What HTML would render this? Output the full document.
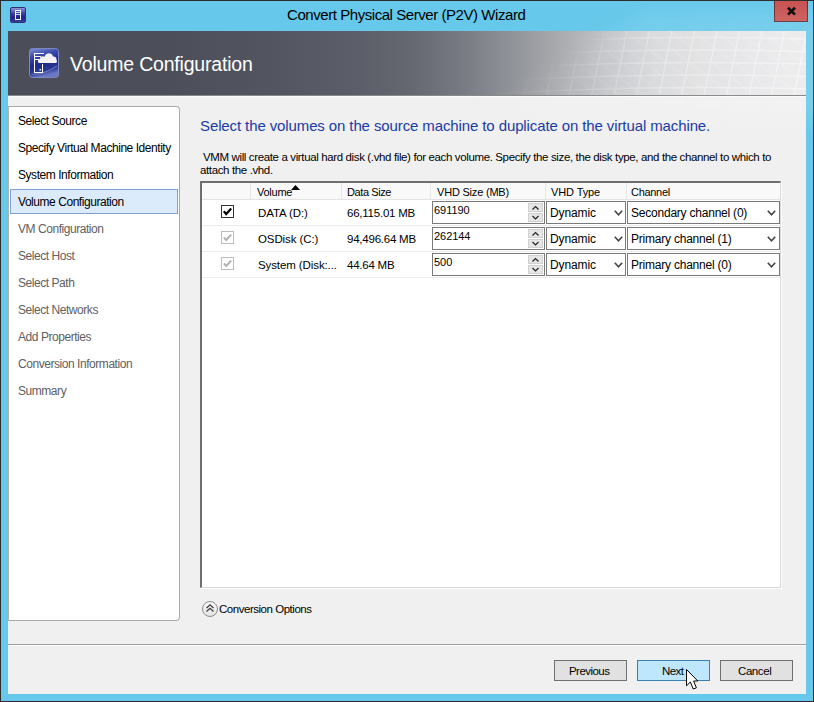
<!DOCTYPE html>
<html><head><meta charset="utf-8">
<style>
*{box-sizing:border-box;margin:0;padding:0}
html,body{width:814px;height:702px;overflow:hidden;background:#2b2b2b}
body{position:relative;font-family:"Liberation Sans",sans-serif;color:#000}
.a{position:absolute}
.t{position:absolute;white-space:pre;line-height:16px}
svg.a{overflow:visible}
</style></head><body>
<div class="a" style="left:0px;top:0px;width:814px;height:702px;background:#2b2b2b"></div>
<div class="a" style="left:1px;top:1px;width:812px;height:700px;background:#66c8ea"></div>
<div class="a" style="left:10px;top:7px;width:16px;height:16px;background:linear-gradient(#8f96d6,#3a3f9a 40%,#1e2383 70%,#3c42a0);border:1px solid #2d3175;border-radius:2px"></div>
<div class="a" style="left:15px;top:10px;width:6px;height:10px;border:1px solid #f4f4ff"></div>
<div class="a" style="left:16px;top:12px;width:4px;height:1px;background:#c9ceff"></div>
<div class="a" style="left:16px;top:14px;width:4px;height:1px;background:#c9ceff"></div>
<div class="t" style="left:287px;top:7px;font-size:15px;letter-spacing:-0.44px;color:#000">Convert Physical Server (P2V) Wizard</div>
<div class="a" style="left:774px;top:1px;width:34px;height:21px;background:#c75050;border:1px solid #5e2a2a;border-top:none"></div>
<svg class="a" style="left:786px;top:6px" width="11" height="10" viewBox="0 0 11 10"><path d="M2 1.8 L9 8.6 M9 1.8 L2 8.6" stroke="#000" stroke-width="2.7"/></svg>
<div class="a" style="left:8px;top:31px;width:798px;height:663px;background:#f0f0f0"></div>
<svg class="a" style="left:8px;top:31px" width="798" height="65" viewBox="0 0 798 65">
<defs>
<linearGradient id="hg" x1="0" y1="0" x2="798" y2="0" gradientUnits="userSpaceOnUse">
<stop offset="0" stop-color="#4b4e58"/><stop offset="0.2" stop-color="#4c4f59"/><stop offset="0.34" stop-color="#535661"/><stop offset="0.44" stop-color="#5c5f69"/><stop offset="0.5" stop-color="#64676f"/><stop offset="0.56" stop-color="#74777f"/><stop offset="0.625" stop-color="#8d9096"/><stop offset="0.69" stop-color="#a8aaae"/><stop offset="0.75" stop-color="#c2c3c7"/><stop offset="0.81" stop-color="#d6d7d9"/><stop offset="0.875" stop-color="#e0e0e2"/><stop offset="0.94" stop-color="#e6e6e8"/><stop offset="1" stop-color="#eaeaec"/>
</linearGradient>
<linearGradient id="sg" x1="460" y1="0" x2="798" y2="0" gradientUnits="userSpaceOnUse">
<stop offset="0" stop-color="#fff" stop-opacity="0"/><stop offset="0.3" stop-color="#fff" stop-opacity="0.12"/><stop offset="0.6" stop-color="#fff" stop-opacity="0.3"/><stop offset="1" stop-color="#fff" stop-opacity="0.42"/>
</linearGradient>
<linearGradient id="sf" x1="460" y1="0" x2="798" y2="0" gradientUnits="userSpaceOnUse">
<stop offset="0" stop-color="#fff" stop-opacity="0"/><stop offset="0.4" stop-color="#fff" stop-opacity="0.1"/><stop offset="1" stop-color="#fff" stop-opacity="0.12"/>
</linearGradient>
<filter id="mb" x="-20%" y="-100%" width="140%" height="300%"><feGaussianBlur stdDeviation="10"/></filter><mask id="mm" maskUnits="userSpaceOnUse" x="0" y="0" width="798" height="65"><path d="M440 90 C520 60 570 25 640 -20 L850 -20 L850 90 Z" fill="url(#sg)" filter="url(#mb)"/></mask>
<filter id="bl"><feGaussianBlur stdDeviation="0.6"/></filter>
</defs>
<rect width="798" height="65" fill="url(#hg)"/>
<path d="M440 90 C520 60 570 25 640 -20 L850 -20 L850 90 Z" fill="url(#sf)" filter="url(#mb)"/>
<g stroke="#ffffff" stroke-width="1.5" fill="none" mask="url(#mm)" filter="url(#bl)"><path d="M380.0 70 L395.0 -5"/><path stroke-opacity="0.45" d="M340.0 -5 L440.0 70"/><path d="M402.5 70 L417.5 -5"/><path stroke-opacity="0.45" d="M362.5 -5 L462.5 70"/><path d="M425.0 70 L440.0 -5"/><path stroke-opacity="0.45" d="M385.0 -5 L485.0 70"/><path d="M447.5 70 L462.5 -5"/><path stroke-opacity="0.45" d="M407.5 -5 L507.5 70"/><path d="M470.0 70 L485.0 -5"/><path stroke-opacity="0.45" d="M430.0 -5 L530.0 70"/><path d="M492.5 70 L507.5 -5"/><path stroke-opacity="0.45" d="M452.5 -5 L552.5 70"/><path d="M515.0 70 L530.0 -5"/><path stroke-opacity="0.45" d="M475.0 -5 L575.0 70"/><path d="M537.5 70 L552.5 -5"/><path stroke-opacity="0.45" d="M497.5 -5 L597.5 70"/><path d="M560.0 70 L575.0 -5"/><path stroke-opacity="0.45" d="M520.0 -5 L620.0 70"/><path d="M582.5 70 L597.5 -5"/><path stroke-opacity="0.45" d="M542.5 -5 L642.5 70"/><path d="M605.0 70 L620.0 -5"/><path stroke-opacity="0.45" d="M565.0 -5 L665.0 70"/><path d="M627.5 70 L642.5 -5"/><path stroke-opacity="0.45" d="M587.5 -5 L687.5 70"/><path d="M650.0 70 L665.0 -5"/><path stroke-opacity="0.45" d="M610.0 -5 L710.0 70"/><path d="M672.5 70 L687.5 -5"/><path stroke-opacity="0.45" d="M632.5 -5 L732.5 70"/><path d="M695.0 70 L710.0 -5"/><path stroke-opacity="0.45" d="M655.0 -5 L755.0 70"/><path d="M717.5 70 L732.5 -5"/><path stroke-opacity="0.45" d="M677.5 -5 L777.5 70"/><path d="M740.0 70 L755.0 -5"/><path stroke-opacity="0.45" d="M700.0 -5 L800.0 70"/><path d="M762.5 70 L777.5 -5"/><path stroke-opacity="0.45" d="M722.5 -5 L822.5 70"/><path d="M785.0 70 L800.0 -5"/><path stroke-opacity="0.45" d="M745.0 -5 L845.0 70"/><path d="M807.5 70 L822.5 -5"/><path stroke-opacity="0.45" d="M767.5 -5 L867.5 70"/><path d="M830.0 70 L845.0 -5"/><path stroke-opacity="0.45" d="M790.0 -5 L890.0 70"/><path d="M852.5 70 L867.5 -5"/><path stroke-opacity="0.45" d="M812.5 -5 L912.5 70"/><path d="M875.0 70 L890.0 -5"/><path stroke-opacity="0.45" d="M835.0 -5 L935.0 70"/><path d="M897.5 70 L912.5 -5"/><path stroke-opacity="0.45" d="M857.5 -5 L957.5 70"/><path d="M920.0 70 L935.0 -5"/><path stroke-opacity="0.45" d="M880.0 -5 L980.0 70"/><path d="M942.5 70 L957.5 -5"/><path stroke-opacity="0.45" d="M902.5 -5 L1002.5 70"/><path d="M965.0 70 L980.0 -5"/><path stroke-opacity="0.45" d="M925.0 -5 L1025.0 70"/><path d="M987.5 70 L1002.5 -5"/><path stroke-opacity="0.45" d="M947.5 -5 L1047.5 70"/><path d="M1010.0 70 L1025.0 -5"/><path stroke-opacity="0.45" d="M970.0 -5 L1070.0 70"/><path d="M1032.5 70 L1047.5 -5"/><path stroke-opacity="0.45" d="M992.5 -5 L1092.5 70"/><path d="M380 -5.0 Q600 -23.0 800 -17.0"/><path d="M380 7.5 Q600 -10.5 800 -4.5"/><path d="M380 20.0 Q600 2.0 800 8.0"/><path d="M380 32.5 Q600 14.5 800 20.5"/><path d="M380 45.0 Q600 27.0 800 33.0"/><path d="M380 57.5 Q600 39.5 800 45.5"/><path d="M380 70.0 Q600 52.0 800 58.0"/><path d="M380 82.5 Q600 64.5 800 70.5"/><path d="M380 95.0 Q600 77.0 800 83.0"/><path d="M380 107.5 Q600 89.5 800 95.5"/><path d="M380 120.0 Q600 102.0 800 108.0"/></g>
</svg>
<div class="a" style="left:8px;top:95px;width:798px;height:1px;background:#8a8a8a"></div>
<div class="a" style="left:8px;top:96px;width:798px;height:1px;background:#fbfbfb"></div>
<svg class="a" style="left:29px;top:48px" width="30" height="30" viewBox="0 0 30 30">
<defs><linearGradient id="ig" x1="0" y1="0" x2="0.25" y2="1"><stop offset="0" stop-color="#8894d6"/><stop offset="0.3" stop-color="#3a4aaa"/><stop offset="0.6" stop-color="#1d2a8c"/><stop offset="0.85" stop-color="#2b3994"/><stop offset="1" stop-color="#6b77c0"/></linearGradient></defs>
<rect x="0.5" y="0.5" width="29" height="29" rx="3" fill="url(#ig)" stroke="#7d88c4"/>
<path d="M2 26 Q15 27 28 18" stroke="#9aa6e0" stroke-opacity="0.5" stroke-width="1.2" fill="none"/>
<path d="M5.5 5 V25 M5 5.5 H15 M5 8.5 H12 M5 11.5 H10 M13.5 16 V25 M5 24.5 H14" stroke="#fff" stroke-width="1" fill="none"/>
<rect x="10.5" y="21" width="1.5" height="1.5" fill="#fff"/>
<path d="M10.5 15 C8.3 15 8.3 11 11 11 C11 8.5 13.5 7.5 15.5 8.8 C16.5 4.5 23 4 24 8.5 C26 8 28 10 27.5 12 C28.5 13 28 15 26.5 15 Z" fill="#f3f3f7"/>
</svg>
<div class="t" style="left:70px;top:56px;font-size:19.5px;letter-spacing:-0.19px;color:#fff">Volume Configuration</div>
<div class="a" style="left:8px;top:106px;width:172px;height:515px;background:#fff;border:1px solid #a9a9a9;border-left-color:#b4b4b4;border-radius:0 4px 4px 0"></div>
<div class="a" style="left:10px;top:189px;width:168px;height:25px;background:#dcebfc;border:1px solid #7da2ce"></div>
<div class="t" style="left:18px;top:113px;font-size:12px;letter-spacing:-0.45px;color:#000">Select Source</div>
<div class="t" style="left:18px;top:140px;font-size:12px;letter-spacing:-0.45px;color:#000">Specify Virtual Machine Identity</div>
<div class="t" style="left:18px;top:167px;font-size:12px;letter-spacing:-0.45px;color:#000">System Information</div>
<div class="t" style="left:18px;top:194px;font-size:12px;letter-spacing:-0.45px;color:#000">Volume Configuration</div>
<div class="t" style="left:18px;top:221px;font-size:12px;letter-spacing:-0.45px;color:#606060">VM Configuration</div>
<div class="t" style="left:18px;top:248px;font-size:12px;letter-spacing:-0.45px;color:#606060">Select Host</div>
<div class="t" style="left:18px;top:275px;font-size:12px;letter-spacing:-0.45px;color:#606060">Select Path</div>
<div class="t" style="left:18px;top:302px;font-size:12px;letter-spacing:-0.45px;color:#606060">Select Networks</div>
<div class="t" style="left:18px;top:329px;font-size:12px;letter-spacing:-0.45px;color:#606060">Add Properties</div>
<div class="t" style="left:18px;top:356px;font-size:12px;letter-spacing:-0.45px;color:#606060">Conversion Information</div>
<div class="t" style="left:18px;top:383px;font-size:12px;letter-spacing:-0.45px;color:#606060">Summary</div>
<div class="t" style="left:200px;top:118px;font-size:15px;letter-spacing:-0.11px;color:#1b3ba4">Select the volumes on the source machine to duplicate on the virtual machine.</div>
<div class="t" style="left:203px;top:149px;font-size:11.5px;letter-spacing:-0.37px">VMM will create a virtual hard disk (.vhd file) for each volume. Specify the size, the disk type, and the channel to which to</div>
<div class="t" style="left:200px;top:162px;font-size:11.5px;letter-spacing:-0.37px">attach the .vhd.</div>
<div class="a" style="left:200px;top:181px;width:581px;height:407px;background:#fff;border-left:2px solid #6e6e6e;border-top:2px solid #6e6e6e;border-right:1px solid #d8d8d8;border-bottom:1px solid #d8d8d8"></div>
<div class="a" style="left:781px;top:181px;width:1px;height:408px;background:#fdfdfd"></div>
<div class="a" style="left:200px;top:588px;width:582px;height:1px;background:#fdfdfd"></div>
<div class="a" style="left:202px;top:183px;width:578px;height:16px;background:#f9f9f9"></div>
<div class="a" style="left:202px;top:199px;width:578px;height:1px;background:#e3e3e3"></div>
<div class="a" style="left:250px;top:183px;width:1px;height:16px;background:#e6e6e6"></div>
<div class="a" style="left:341px;top:183px;width:1px;height:16px;background:#e6e6e6"></div>
<div class="a" style="left:430px;top:183px;width:1px;height:16px;background:#e6e6e6"></div>
<div class="a" style="left:545px;top:183px;width:1px;height:16px;background:#e6e6e6"></div>
<div class="a" style="left:626px;top:183px;width:1px;height:16px;background:#e6e6e6"></div>
<div class="t" style="left:257px;top:184px;font-size:11px;letter-spacing:-0.25px">Volume</div>
<svg class="a" style="left:291px;top:185px" width="9" height="5"><path d="M0 5 L4.5 0 L9 5Z" fill="#000"/></svg>
<div class="t" style="left:347px;top:184px;font-size:11px;letter-spacing:-0.4px">Data Size</div>
<div class="t" style="left:437px;top:184px;font-size:11px;letter-spacing:-0.2px">VHD Size (MB)</div>
<div class="t" style="left:551px;top:184px;font-size:11px;letter-spacing:-0.1px">VHD Type</div>
<div class="t" style="left:631px;top:184px;font-size:11px;letter-spacing:-0.3px">Channel</div>
<div class="a" style="left:202px;top:225px;width:578px;height:1px;background:#ececec"></div>
<div class="a" style="left:202px;top:251px;width:578px;height:1px;background:#ececec"></div>
<div class="a" style="left:202px;top:277px;width:578px;height:1px;background:#ececec"></div>
<div class="a" style="left:221px;top:205px;width:13px;height:13px;background:#fff;border:1px solid #333"></div>
<svg class="a" style="left:221px;top:205px" width="13" height="13"><path d="M2.8 6.3 L5.2 9 L10.2 3.6" stroke="#000" stroke-width="2.2" fill="none"/></svg>
<div class="t" style="left:258px;top:205px;font-size:11.5px;letter-spacing:-0.1px">DATA (D:)</div>
<div class="t" style="left:347px;top:205px;font-size:11.5px;letter-spacing:-0.23px">66,115.01 MB</div>
<div class="a" style="left:432px;top:201px;width:113px;height:23px;background:#fff;border:1px solid #7a7a7a"></div>
<div class="t" style="left:434px;top:202px;font-size:11px;letter-spacing:-0.05px">691190</div>
<div class="a" style="left:528px;top:203px;width:15px;height:9px;background:#e6e6e6;border:1px solid #d0d0d0"></div>
<div class="a" style="left:528px;top:213px;width:15px;height:9px;background:#e6e6e6;border:1px solid #d0d0d0"></div>
<svg class="a" style="left:528px;top:203px" width="15" height="19"><path d="M4.5 6.5 L7.5 3.5 L10.5 6.5 M4.5 13 L7.5 16 L10.5 13" stroke="#222" stroke-width="1.2" fill="none"/></svg>
<div class="a" style="left:546px;top:201px;width:80px;height:23px;background:#fff;border:1px solid #7a7a7a"></div>
<div class="t" style="left:550px;top:205px;font-size:12px;letter-spacing:-0.1px">Dynamic</div>
<svg class="a" style="left:614px;top:210px" width="9" height="6"><path d="M0.8 0.8 L4.5 4.8 L8.2 0.8" stroke="#444" stroke-width="1.6" fill="none"/></svg>
<div class="a" style="left:627px;top:201px;width:153px;height:23px;background:#fff;border:1px solid #7a7a7a"></div>
<div class="t" style="left:631px;top:205px;font-size:12px;letter-spacing:-0.22px">Secondary channel (0)</div>
<svg class="a" style="left:767px;top:210px" width="9" height="6"><path d="M0.8 0.8 L4.5 4.8 L8.2 0.8" stroke="#444" stroke-width="1.6" fill="none"/></svg>
<div class="a" style="left:221px;top:231px;width:13px;height:13px;background:#fff;border:1px solid #bcbcbc"></div>
<svg class="a" style="left:221px;top:231px" width="13" height="13"><path d="M2.8 6.3 L5.2 9 L10.2 3.6" stroke="#b0b0b0" stroke-width="1.9" fill="none"/></svg>
<div class="t" style="left:258px;top:231px;font-size:11.5px;letter-spacing:-0.1px">OSDisk (C:)</div>
<div class="t" style="left:347px;top:231px;font-size:11.5px;letter-spacing:-0.23px">94,496.64 MB</div>
<div class="a" style="left:432px;top:227px;width:113px;height:23px;background:#fff;border:1px solid #7a7a7a"></div>
<div class="t" style="left:434px;top:228px;font-size:11px;letter-spacing:-0.05px">262144</div>
<div class="a" style="left:528px;top:229px;width:15px;height:9px;background:#e6e6e6;border:1px solid #d0d0d0"></div>
<div class="a" style="left:528px;top:239px;width:15px;height:9px;background:#e6e6e6;border:1px solid #d0d0d0"></div>
<svg class="a" style="left:528px;top:229px" width="15" height="19"><path d="M4.5 6.5 L7.5 3.5 L10.5 6.5 M4.5 13 L7.5 16 L10.5 13" stroke="#222" stroke-width="1.2" fill="none"/></svg>
<div class="a" style="left:546px;top:227px;width:80px;height:23px;background:#fff;border:1px solid #7a7a7a"></div>
<div class="t" style="left:550px;top:231px;font-size:12px;letter-spacing:-0.1px">Dynamic</div>
<svg class="a" style="left:614px;top:236px" width="9" height="6"><path d="M0.8 0.8 L4.5 4.8 L8.2 0.8" stroke="#444" stroke-width="1.6" fill="none"/></svg>
<div class="a" style="left:627px;top:227px;width:153px;height:23px;background:#fff;border:1px solid #7a7a7a"></div>
<div class="t" style="left:631px;top:231px;font-size:12px;letter-spacing:-0.22px">Primary channel (1)</div>
<svg class="a" style="left:767px;top:236px" width="9" height="6"><path d="M0.8 0.8 L4.5 4.8 L8.2 0.8" stroke="#444" stroke-width="1.6" fill="none"/></svg>
<div class="a" style="left:221px;top:257px;width:13px;height:13px;background:#fff;border:1px solid #bcbcbc"></div>
<svg class="a" style="left:221px;top:257px" width="13" height="13"><path d="M2.8 6.3 L5.2 9 L10.2 3.6" stroke="#b0b0b0" stroke-width="1.9" fill="none"/></svg>
<div class="t" style="left:258px;top:257px;font-size:11.5px;letter-spacing:-0.1px">System (Disk:...</div>
<div class="t" style="left:347px;top:257px;font-size:11.5px;letter-spacing:-0.23px">44.64 MB</div>
<div class="a" style="left:432px;top:253px;width:113px;height:23px;background:#fff;border:1px solid #7a7a7a"></div>
<div class="t" style="left:434px;top:254px;font-size:11px;letter-spacing:-0.05px">500</div>
<div class="a" style="left:528px;top:255px;width:15px;height:9px;background:#e6e6e6;border:1px solid #d0d0d0"></div>
<div class="a" style="left:528px;top:265px;width:15px;height:9px;background:#e6e6e6;border:1px solid #d0d0d0"></div>
<svg class="a" style="left:528px;top:255px" width="15" height="19"><path d="M4.5 6.5 L7.5 3.5 L10.5 6.5 M4.5 13 L7.5 16 L10.5 13" stroke="#222" stroke-width="1.2" fill="none"/></svg>
<div class="a" style="left:546px;top:253px;width:80px;height:23px;background:#fff;border:1px solid #7a7a7a"></div>
<div class="t" style="left:550px;top:257px;font-size:12px;letter-spacing:-0.1px">Dynamic</div>
<svg class="a" style="left:614px;top:262px" width="9" height="6"><path d="M0.8 0.8 L4.5 4.8 L8.2 0.8" stroke="#444" stroke-width="1.6" fill="none"/></svg>
<div class="a" style="left:627px;top:253px;width:153px;height:23px;background:#fff;border:1px solid #7a7a7a"></div>
<div class="t" style="left:631px;top:257px;font-size:12px;letter-spacing:-0.22px">Primary channel (0)</div>
<svg class="a" style="left:767px;top:262px" width="9" height="6"><path d="M0.8 0.8 L4.5 4.8 L8.2 0.8" stroke="#444" stroke-width="1.6" fill="none"/></svg>
<div class="a" style="left:202px;top:601px;width:16px;height:16px;background:linear-gradient(#f8f8f8,#e4e4e4);border:1px solid #8c8c8c;border-radius:50%"></div>
<svg class="a" style="left:205px;top:603px" width="10" height="10"><path d="M1.5 5 L5 1.8 L8.5 5 M1.5 8.5 L5 5.3 L8.5 8.5" stroke="#3a3a3a" stroke-width="1.2" fill="none"/></svg>
<div class="t" style="left:219px;top:601px;font-size:11.5px;letter-spacing:-0.47px">Conversion Options</div>
<div class="a" style="left:8px;top:644px;width:798px;height:1px;background:#a0a0a0"></div>
<div class="a" style="left:8px;top:645px;width:798px;height:1px;background:#fcfcfc"></div>
<div class="a" style="left:554px;top:660px;width:73px;height:21px;background:#e1e1e1;border:1px solid #707070"></div><div class="t" style="left:569px;top:663px;font-size:11.5px;letter-spacing:-0.55px">Previous</div>
<div class="a" style="left:637px;top:660px;width:73px;height:21px;background:#bee6fd;border:1px solid #3c7fb1"></div><div class="t" style="left:662px;top:663px;font-size:11.5px;letter-spacing:-0.6px">Next</div>
<div class="a" style="left:720px;top:660px;width:73px;height:21px;background:#e1e1e1;border:1px solid #707070"></div><div class="t" style="left:738px;top:663px;font-size:11.5px;letter-spacing:-0.42px">Cancel</div>
<svg class="a" style="left:685px;top:668px" width="14" height="23" viewBox="0 0 14 23"><path d="M1.5 1.5 L1.5 17.8 L5.4 14 L8.2 21 L11.4 19.8 L8.6 13 L12.8 13 Z" fill="#fff" stroke="#000" stroke-width="1"/></svg>
</body></html>
